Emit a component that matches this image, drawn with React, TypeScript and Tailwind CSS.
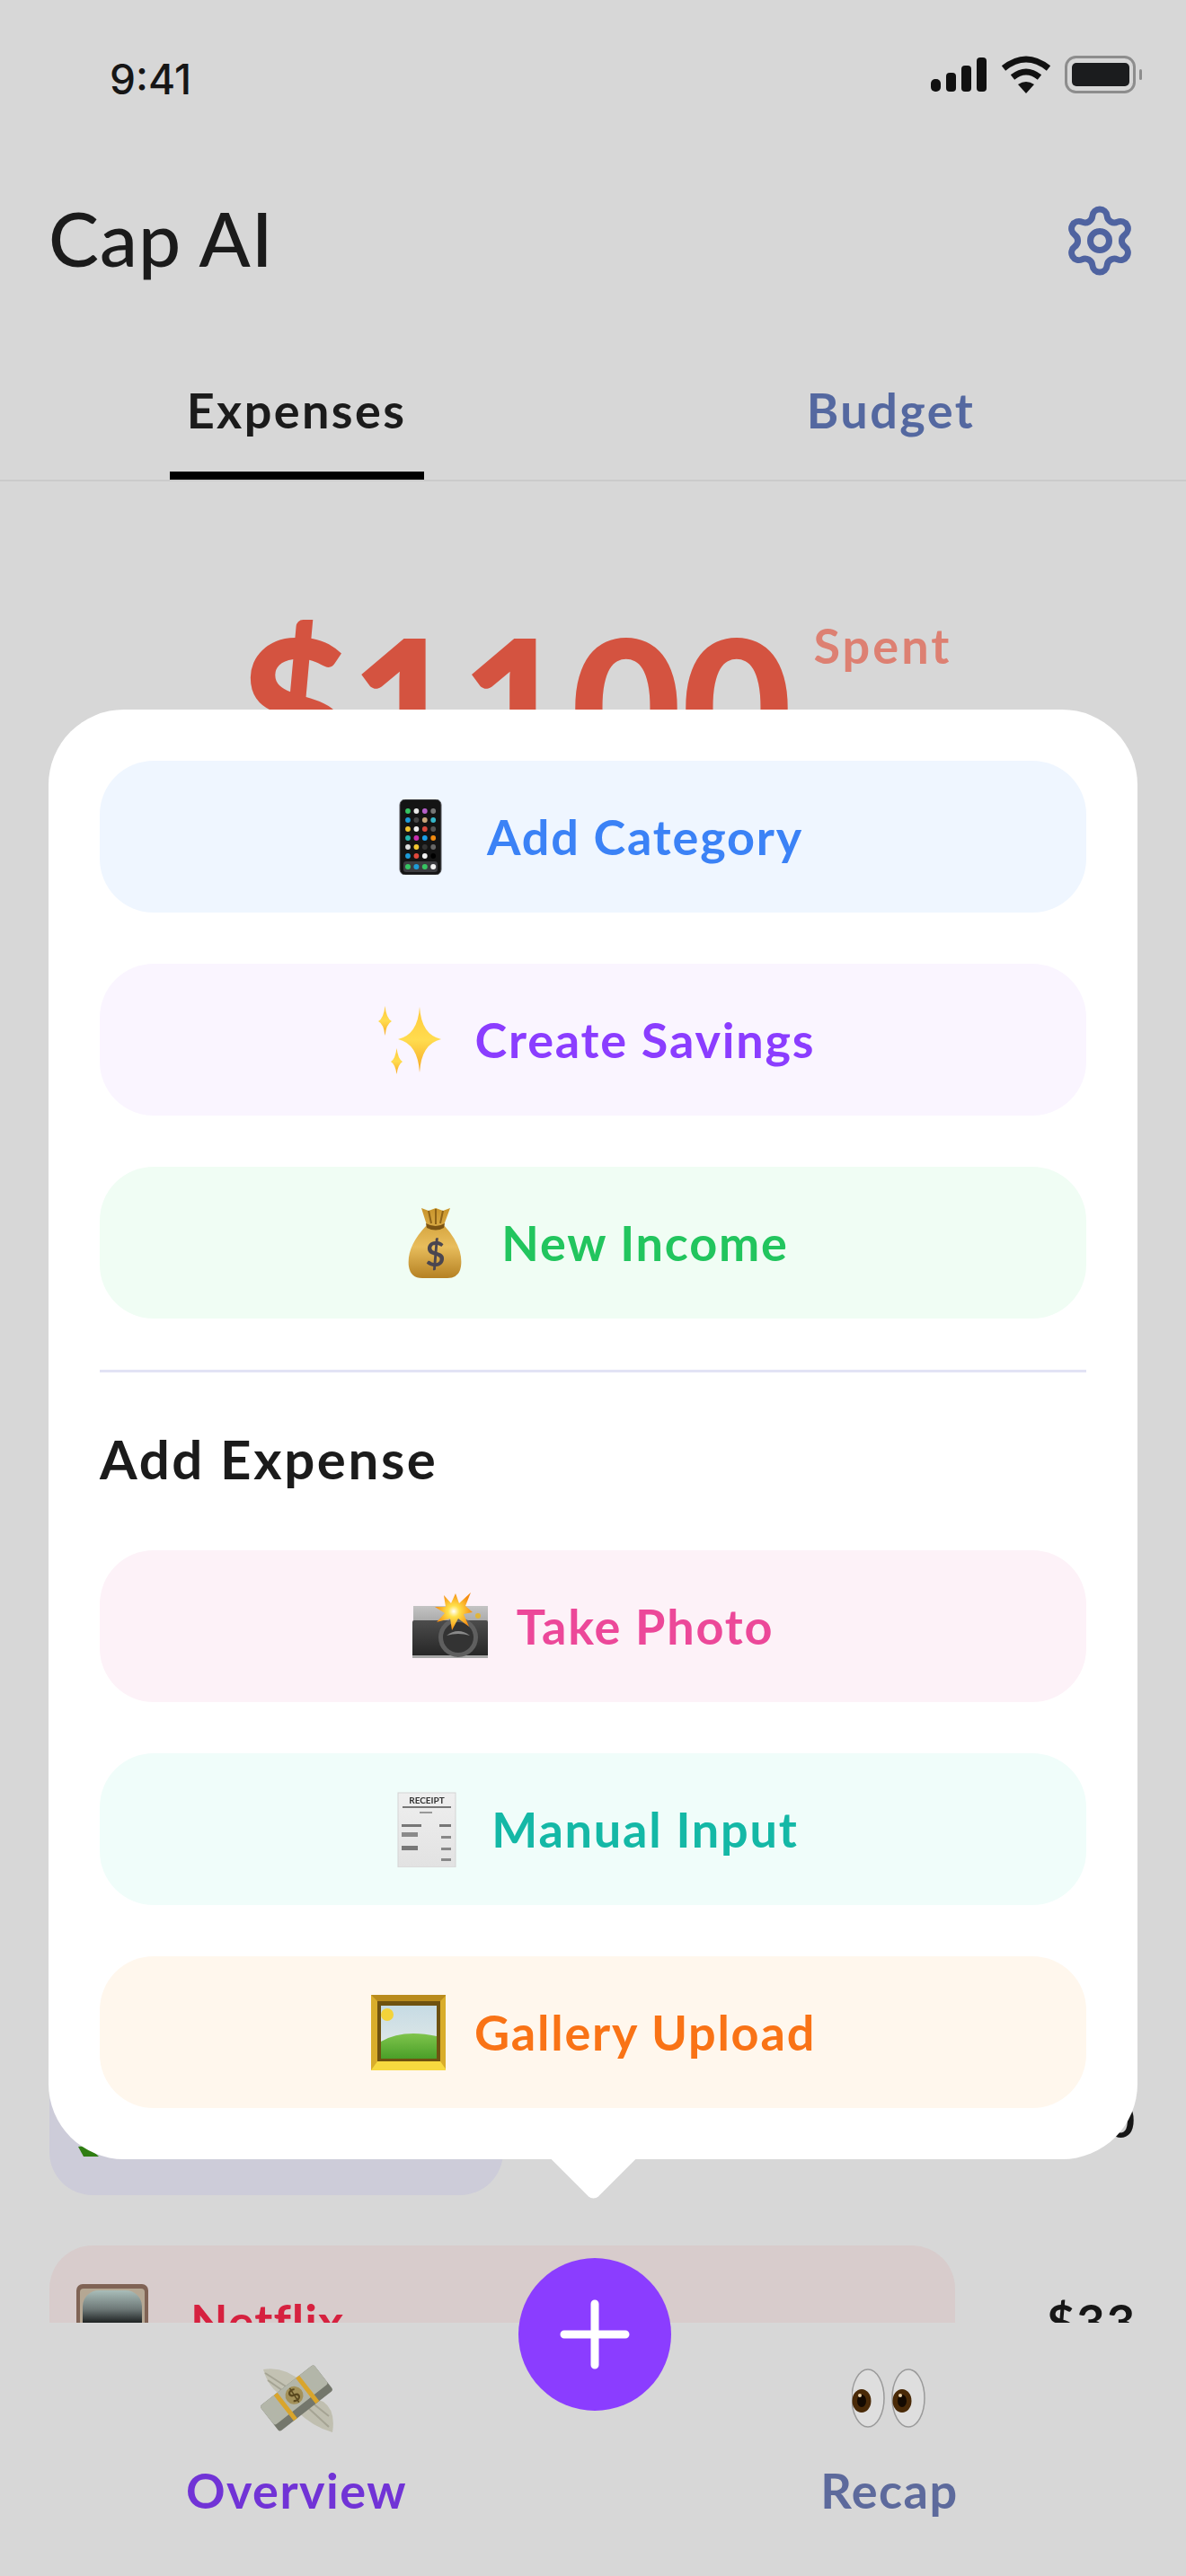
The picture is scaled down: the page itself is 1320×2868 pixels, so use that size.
import { Settings } from "lucide-react";
import type { ReactNode } from "react";

function Emoji({ children }: { children: ReactNode }) {
  return (
    <svg viewBox="0 0 84 84" className="w-[84px] h-[84px] shrink-0 blur-[0.5px]">
      {children}
    </svg>
  );
}

const PHONE_DOTS = [
  ["#37c463", "#e8e8e8", "#b65fc9", "#777777"],
  ["#1e9bd8", "#444444", "#c9a77c", "#35b6c9"],
  ["#f2c530", "#eeeeee", "#d8483c", "#555555"],
  ["#25b7b0", "#c92fb0", "#1b9ee8", "#f08a10"],
  ["#dddddd", "#f2c530", "#333333", "#666666"],
  ["#1e9bd8", "#e0483c", "#f2f2f2", "#000000"],
];

function PhoneEmoji() {
  return (
    <Emoji>
      <rect x="19" y="0" width="46" height="84" rx="6" fill="#141414" stroke="#55555a" strokeWidth="1" />
      {PHONE_DOTS.map((row, r) =>
        row.map((c, i) => <circle key={`${r}-${i}`} cx={28 + i * 9.4} cy={13 + r * 10} r="2.9" fill={c} />)
      )}
      <rect x="23" y="69" width="38" height="12" rx="3" fill="#3c3c40" />
      {["#37c463", "#1e9bd8", "#37c463", "#f2f2f2"].map((c, i) => (
        <circle key={i} cx={28 + i * 9.4} cy="75" r="3" fill={c} />
      ))}
    </Emoji>
  );
}

function SparklesEmoji() {
  return (
    <Emoji>
      <defs>
        <linearGradient id="spark" x1="0" y1="0" x2="0" y2="1">
          <stop offset="0" stopColor="#ffc93a" />
          <stop offset="0.5" stopColor="#ffdc4f" />
          <stop offset="1" stopColor="#f6a723" />
        </linearGradient>
      </defs>
      <path d="M54 5Q56 36 78 41Q56 46 54 78Q52 46 30 41Q52 36 54 5Z" fill="url(#spark)" />
      <path d="M15.5 4Q17 18 23 21Q17 24 15.5 37Q14 24 8 21Q14 18 15.5 4Z" fill="url(#spark)" />
      <path d="M28.5 51Q30 63 35 66Q30 69 28.5 80Q27 69 22 66Q27 63 28.5 51Z" fill="url(#spark)" />
    </Emoji>
  );
}

function BagEmoji() {
  return (
    <Emoji>
      <defs>
        <linearGradient id="bag" x1="0" y1="0" x2="0" y2="1">
          <stop offset="0" stopColor="#c9952c" />
          <stop offset="0.55" stopColor="#e8bd5c" />
          <stop offset="1" stopColor="#b58123" />
        </linearGradient>
      </defs>
      <path d="M27 3L35 6L43 3L51 6L59 3L52 22Q74 46 71 68Q69 81 56 81H28Q15 81 13 68Q10 46 33 22Z" fill="url(#bag)" />
      <path d="M32 20Q43 26 53 20L52 25Q43 30 33 25Z" fill="#7b5414" />
      <path d="M35 6L38 20M43 4V21M51 6L48 20" stroke="#8f6418" strokeWidth="2" />
      <text x="42.5" y="68" textAnchor="middle" fontSize="38" fontWeight="700" fontFamily="Lato, sans-serif" fill="#4a4650">$</text>
    </Emoji>
  );
}

function CameraEmoji() {
  return (
    <Emoji>
      <defs>
        <linearGradient id="camTop" x1="0" y1="0" x2="0" y2="1">
          <stop offset="0" stopColor="#c4c4c4" />
          <stop offset="1" stopColor="#a9a9a9" />
        </linearGradient>
        <linearGradient id="camBody" x1="0" y1="0" x2="0" y2="1">
          <stop offset="0" stopColor="#4c4c4c" />
          <stop offset="1" stopColor="#252525" />
        </linearGradient>
        <radialGradient id="flash">
          <stop offset="0" stopColor="#ffffff" />
          <stop offset="0.3" stopColor="#ffe14a" />
          <stop offset="1" stopColor="#f58c12" />
        </radialGradient>
      </defs>
      <rect x="1" y="19" width="83" height="18" fill="url(#camTop)" />
      <rect x="0" y="35" width="84" height="41" rx="2" fill="url(#camBody)" />
      <rect x="0" y="74" width="84" height="3" fill="#a8a8a8" />
      <circle cx="51" cy="54" r="22" fill="#5f5f5f" />
      <circle cx="51" cy="54" r="17" fill="#333333" />
      <path d="M38 52Q51 42 64 52Q51 48 38 52Z" fill="#8a8a8a" />
      <circle cx="73" cy="30" r="3" fill="#e0b53a" />
      <path
        d="M48 5L52 16L65 4L59 19L67 26L57 28L63 42L51 33L44 46L42 33L27 37L36 27L25 20L37 20L35 7L43 16Z"
        fill="url(#flash)"
      />
    </Emoji>
  );
}

function ReceiptEmoji() {
  return (
    <Emoji>
      <defs>
        <linearGradient id="paper" x1="0" y1="0" x2="0" y2="1">
          <stop offset="0" stopColor="#efefef" />
          <stop offset="1" stopColor="#e2e2e2" />
        </linearGradient>
      </defs>
      <rect x="12" y="1" width="64" height="83" fill="url(#paper)" stroke="#d4d4d4" strokeWidth="1" />
      <text x="44" y="13" textAnchor="middle" fontSize="10" fontWeight="700" fontFamily="Lato, sans-serif" fill="#333333">RECEIPT</text>
      <rect x="17" y="16" width="54" height="2" fill="#777777" />
      <rect x="36" y="22" width="14" height="2" fill="#999999" />
      <rect x="16" y="36" width="22" height="3" fill="#777777" />
      <rect x="58" y="36" width="13" height="3" fill="#777777" />
      <rect x="16" y="45" width="18" height="5" fill="#8a8a8a" />
      <rect x="60" y="49" width="11" height="3" fill="#888888" />
      <rect x="16" y="60" width="18" height="5" fill="#777777" />
      <rect x="60" y="62" width="11" height="3" fill="#888888" />
      <rect x="60" y="74" width="11" height="3" fill="#888888" />
    </Emoji>
  );
}

function FrameEmoji() {
  return (
    <Emoji>
      <defs>
        <linearGradient id="sky" x1="0" y1="0" x2="0" y2="1">
          <stop offset="0" stopColor="#c6dbe4" />
          <stop offset="1" stopColor="#e6ebe8" />
        </linearGradient>
        <linearGradient id="hill" x1="0" y1="0" x2="0" y2="1">
          <stop offset="0" stopColor="#7fc44c" />
          <stop offset="1" stopColor="#4a9f28" />
        </linearGradient>
      </defs>
      <rect x="1" y="0" width="84" height="84" fill="#d9ad2b" />
      <path d="M1 84L8 74H78L85 84Z" fill="#f7d93f" />
      <path d="M1 0L8 7H78L85 0Z" fill="#b98b1c" />
      <rect x="8" y="7" width="70" height="67" fill="#6f5210" />
      <rect x="12" y="12" width="62" height="59" fill="url(#sky)" />
      <circle cx="19" cy="22" r="7" fill="#f3d33a" />
      <path d="M12 52Q36 38 74 46V71H12Z" fill="url(#hill)" />
    </Emoji>
  );
}

function WingedMoneyEmoji() {
  return (
    <Emoji>
      <path d="M5 10Q28 6 48 24L36 44Q12 36 5 10Z" fill="#c3c2b3" />
      <path d="M7 14L38 34M10 22L30 36" stroke="#a5a494" strokeWidth="2" />
      <path d="M82 80Q86 56 72 46L50 38L42 56Q60 74 82 80Z" fill="#c0bfb0" />
      <path d="M78 74L52 50M78 62L58 46" stroke="#a5a494" strokeWidth="2" />
      <g transform="rotate(-38 42 42)">
        <rect x="4" y="24" width="76" height="36" rx="3" fill="#74776c" />
        <rect x="4" y="24" width="76" height="27" rx="3" fill="#b3b6a9" />
        <rect x="24" y="24" width="5" height="36" fill="#d9a52c" />
        <rect x="55" y="24" width="5" height="36" fill="#d9a52c" />
        <circle cx="42" cy="38" r="10" fill="#a39159" />
        <text x="42" y="45" textAnchor="middle" fontSize="20" fontWeight="700" fontFamily="Lato, sans-serif" fill="#5b4a1f">$</text>
      </g>
    </Emoji>
  );
}

function EyesEmoji() {
  return (
    <Emoji>
      {[18, 63].map((cx) => (
        <g key={cx}>
          <ellipse cx={cx} cy="42" rx="18" ry="32" fill="#dedede" stroke="#9a9a9a" strokeWidth="1.5" />
          <ellipse cx={cx - 7} cy="45" rx="10.5" ry="13" fill="#4a2a08" />
          <ellipse cx={cx - 7} cy="45" rx="5" ry="7" fill="#140a02" />
          <circle cx={cx - 9} cy="39" r="2" fill="#e8d0a8" />
        </g>
      ))}
    </Emoji>
  );
}

function TvEmoji() {
  return (
    <Emoji>
      <defs>
        <linearGradient id="screen" x1="0" y1="0" x2="0" y2="1">
          <stop offset="0" stopColor="#a9bdb9" />
          <stop offset="0.3" stopColor="#6d7877" />
          <stop offset="0.52" stopColor="#1c2020" />
        </linearGradient>
      </defs>
      <rect x="2" y="0" width="80" height="84" rx="7" fill="#806355" />
      <rect x="6" y="5" width="72" height="74" rx="4" fill="#b5a793" />
      <rect x="9" y="7" width="66" height="70" rx="18" fill="url(#screen)" />
    </Emoji>
  );
}

function PlantEmoji() {
  return (
    <Emoji>
      <path d="M4 72L14 71L27 83H10Z" fill="#2f7d12" />
    </Emoji>
  );
}

const ACTIONS_TOP = [
  { label: "Add Category", bg: "bg-[#eff6ff]", text: "text-[#3b82f6]", icon: <PhoneEmoji /> },
  { label: "Create Savings", bg: "bg-[#faf5ff]", text: "text-[#8b3dff]", icon: <SparklesEmoji /> },
  { label: "New Income", bg: "bg-[#f0fdf4]", text: "text-[#22c55e]", icon: <BagEmoji /> },
];

const ACTIONS_EXPENSE = [
  { label: "Take Photo", bg: "bg-[#fdf2f8]", text: "text-[#ec4899]", icon: <CameraEmoji /> },
  { label: "Manual Input", bg: "bg-[#f0fdfa]", text: "text-[#14b8a6]", icon: <ReceiptEmoji /> },
  { label: "Gallery Upload", bg: "bg-[#fff7ed]", text: "text-[#f97316]", icon: <FrameEmoji /> },
];

function ActionButton({ label, bg, text, icon }: { label: string; bg: string; text: string; icon: ReactNode }) {
  return (
    <button className={`h-[169px] w-full rounded-[60px] flex items-center justify-center gap-[32px] ${bg}`}>
      {icon}
      <span className={`text-[54px] font-bold leading-none tracking-[1.8px] ${text}`}>{label}</span>
    </button>
  );
}

function StatusIcons() {
  return (
    <div className="flex items-center gap-[15px] pt-[2px]">
      <svg viewBox="0 0 64 38" className="w-[64px] h-[38px]" fill="#111111">
        <rect x="1" y="24" width="11" height="14" rx="5" />
        <rect x="18" y="17" width="11" height="21" rx="4" />
        <rect x="35" y="9" width="11" height="29" rx="4" />
        <rect x="52" y="0" width="11" height="38" rx="4" />
      </svg>
      <svg viewBox="0 0 56 42" className="w-[56px] h-[42px]" fill="none" stroke="#111111" strokeWidth="7">
        <path d="M3 14Q28 -6 53 14" />
        <path d="M13 24Q28 12 43 24" />
        <path d="M28 42L19 32Q28 26 37 32Z" fill="#111111" stroke="none" />
      </svg>
      <svg viewBox="0 0 87 42" className="w-[87px] h-[42px]">
        <rect x="1.5" y="1.5" width="76" height="39" rx="11" fill="none" stroke="#8d8d8d" strokeWidth="3" />
        <rect x="8" y="8" width="64" height="26" rx="5" fill="#1b1c1e" />
        <rect x="83" y="15" width="3" height="12" rx="1.5" fill="#8d8d8d" />
      </svg>
    </div>
  );
}

function Tab({ label, active }: { label: string; active?: boolean }) {
  return (
    <div className="flex-1 flex justify-center">
      <div className={`w-[283px] h-full flex items-center justify-center pt-[28px] border-b-[9px] -mb-[2px] ${active ? "border-black" : "border-transparent"}`}>
        <span className={`text-[54px] font-bold leading-none tracking-[2.4px] ${active ? "text-[#1b1b1b]" : "pl-[3px] text-[#5468a0]"}`}>{label}</span>
      </div>
    </div>
  );
}

function NavItem({ label, icon, color }: { label: string; icon: ReactNode; color: string }) {
  return (
    <div className="flex flex-col items-center pt-[42px]">
      {icon}
      <span className={`mt-[34px] text-[54px] font-bold leading-none tracking-[1.5px] ${color}`}>{label}</span>
    </div>
  );
}

export default function App() {
  return (
    <div className="relative h-[2868px] w-[1320px] overflow-hidden bg-[#d7d7d7] flex flex-col font-['Lato',sans-serif]">
      <div className="h-[176px] shrink-0 flex items-start justify-between pt-[60px] pl-[122px] pr-[48px]">
        <span className="font-['Inter',sans-serif] font-medium text-[46px] leading-[56px] text-[#161616]">9:41</span>
        <StatusIcons />
      </div>

      <header className="h-[184px] shrink-0 flex items-center justify-between px-[54px]">
        <h1 className="text-[84px] font-medium leading-none -mt-[6px] tracking-[1px] text-[#1b1b1b]">Cap AI</h1>
        <Settings className="w-[84px] h-[84px] text-[#4f63a0]" strokeWidth={2} />
      </header>

      <nav className="h-[176px] shrink-0 flex border-b-[2px] border-[#cbcbcb]">
        <Tab label="Expenses" active />
        <Tab label="Budget" />
      </nav>

      <main className="flex-1 min-h-0 overflow-hidden">
        <section className="h-[1739px] flex justify-center items-start pt-[141px] pl-[6px]">
          <span className="text-[212px] font-black leading-none text-[#d45340]">$1100</span>
          <span className="mt-[15px] ml-[24px] text-[54px] font-bold leading-none tracking-[3px] text-[#dd8072]">Spent</span>
        </section>
        <div className="flex flex-col gap-[56px] px-[55px]">
          <div className="flex items-center justify-between">
            <div className="h-[169px] w-[505px] rounded-[48px] bg-[#cdccd9] flex items-center pl-[28px]">
              <PlantEmoji />
            </div>
            <span className="text-[54px] font-bold leading-none tracking-[2px] text-[#161616]">$50</span>
          </div>
          <div className="flex items-center justify-between">
            <div className="h-[169px] w-[1008px] rounded-[48px] bg-[#d8cccc] flex items-center gap-[45px] pl-[28px]">
              <TvEmoji />
              <span className="text-[54px] font-bold leading-none tracking-[1px] text-[#d6213f]">Netflix</span>
            </div>
            <span className="text-[54px] font-bold leading-none tracking-[2px] text-[#161616]">$33</span>
          </div>
        </div>
      </main>

      <footer className="h-[282px] shrink-0 grid grid-cols-2 bg-[#d7d7d7]">
        <NavItem label="Overview" icon={<WingedMoneyEmoji />} color="text-[#7133d6]" />
        <NavItem label="Recap" icon={<EyesEmoji />} color="text-[#5d6a9c]" />
      </footer>

      {/* popup menu above the add button */}
      <div className="absolute top-[790px] left-[54px] right-[54px] rounded-[84px] bg-white p-[57px]">
        <div className="flex flex-col gap-[57px]">
          {ACTIONS_TOP.map((a) => (
            <ActionButton key={a.label} {...a} />
          ))}
        </div>
        <div className="mt-[57px] h-[3px] bg-[#e2e3f5]" />
        <h2 className="mt-[57px] mb-[63px] text-[60px] font-bold leading-[78px] tracking-[2.6px] text-[#1b1b1b]">Add Expense</h2>
        <div className="flex flex-col gap-[57px]">
          {ACTIONS_EXPENSE.map((a) => (
            <ActionButton key={a.label} {...a} />
          ))}
        </div>
        <div className="absolute -bottom-[33px] left-1/2 -ml-[33px] w-[67px] h-[67px] rotate-45 rounded-br-[8px] bg-white" />
      </div>

      <button className="absolute top-[2514px] left-[577px] w-[170px] h-[170px] rounded-full bg-[#8b3dff] flex items-center justify-center">
        <svg viewBox="0 0 78 78" className="w-[78px] h-[78px]" stroke="#ffffff" strokeWidth="9" strokeLinecap="round">
          <path d="M39 5V73M5 39H73" />
        </svg>
      </button>
    </div>
  );
}
